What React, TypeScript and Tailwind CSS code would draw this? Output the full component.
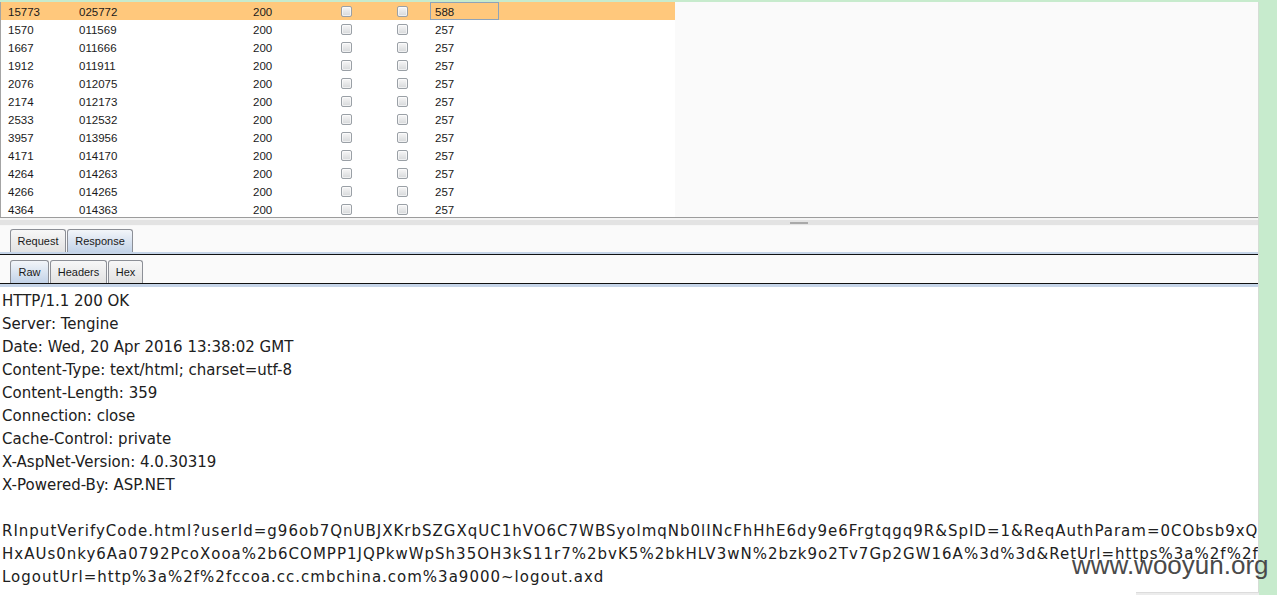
import React from "react";

const rows: [string, string, string][] = [
  ["15773", "025772", "588"],
  ["1570", "011569", "257"],
  ["1667", "011666", "257"],
  ["1912", "011911", "257"],
  ["2076", "012075", "257"],
  ["2174", "012173", "257"],
  ["2533", "012532", "257"],
  ["3957", "013956", "257"],
  ["4171", "014170", "257"],
  ["4264", "014263", "257"],
  ["4266", "014265", "257"],
  ["4364", "014363", "257"],
];

const headerLines = [
  "HTTP/1.1 200 OK",
  "Server: Tengine",
  "Date: Wed, 20 Apr 2016 13:38:02 GMT",
  "Content-Type: text/html; charset=utf-8",
  "Content-Length: 359",
  "Connection: close",
  "Cache-Control: private",
  "X-AspNet-Version: 4.0.30319",
  "X-Powered-By: ASP.NET",
];

const bodyLines = [
  "RInputVerifyCode.html?userId=g96ob7QnUBJXKrbSZGXqUC1hVO6C7WBSyolmqNb0lINcFhHhE6dy9e6Frgtqgq9R&SpID=1&ReqAuthParam=0CObsb9xQmT1rV",
  "HxAUs0nky6Aa0792PcoXooa%2b6COMPP1JQPkwWpSh35OH3kS11r7%2bvK5%2bkHLV3wN%2bzk9o2Tv7Gp2GW16A%3d%3d&RetUrl=https%3a%2f%2fccoa",
  "LogoutUrl=http%3a%2f%2fccoa.cc.cmbchina.com%3a9000~logout.axd",
];

function Check() {
  return (
    <div className="w-[11px] h-[11px] rounded-[2px] border border-[#9aa0a6] bg-gradient-to-b from-[#f7f7f7] to-[#d6d8da] shadow-[inset_0_0_0_1px_rgba(255,255,255,0.6)]" />
  );
}

function Tab({ label, selected, w }: { label: string; selected?: boolean; w: string }) {
  return (
    <div
      className={`${w} h-[23px] flex items-center justify-center rounded-t-[3px] border border-b-0 border-[#8c8f96] text-[11px] text-[#1a1a1a] ${
        selected
          ? "bg-gradient-to-b from-[#f2f5f9] to-[#c3d3e8]"
          : "bg-gradient-to-b from-[#f7f7f7] to-[#e2e2e2]"
      }`}
      style={{ fontFamily: '"Liberation Sans", Arial, sans-serif' }}
    >
      {label}
    </div>
  );
}

export default function App() {
  return (
    <div className="relative w-[1277px] h-[595px] overflow-hidden bg-[#c7ebcd] pt-[2px]">
      <div className="w-[1259px] h-[593px] flex flex-col bg-[#fafafa] border-r border-[#d5ddd5]">
        {/* table pane */}
        <div className="flex h-[216px] border-b border-[#9c9c9c] shrink-0">
          <div
            className="w-[675px] bg-white border-l border-[#a4a4a4] overflow-hidden text-[11.5px] leading-[14px] text-[#1a1a1a]"
            style={{ fontFamily: '"Liberation Sans", Arial, sans-serif' }}
          >
            {rows.map((r, i) => (
              <div
                key={i}
                className={`flex items-center h-[18px] ${i === 0 ? "bg-[#ffc87c]" : "bg-white"}`}
              >
                <div className="w-[74px] pl-[7px] pt-[2px]">{r[0]}</div>
                <div className="w-[174px] pl-[4px] pt-[2px]">{r[1]}</div>
                <div className="w-[79px] pl-[4px] pt-[2px]">200</div>
                <div className="w-[56px] pl-[13px]">
                  <Check />
                </div>
                <div className="w-[46px] pl-[13px]">
                  <Check />
                </div>
                <div
                  className={`w-[69px] h-[18px] flex items-center pt-[2px] ${
                    i === 0 ? "border border-[#8fa3b8] pl-[4px] pt-[1px]" : "pl-[5px]"
                  }`}
                >
                  {r[2]}
                </div>
                <div className="flex-1" />
              </div>
            ))}
          </div>
          <div className="flex-1 bg-[#fafafa]" />
        </div>

        {/* splitter */}
        <div className="h-[8px] shrink-0 flex flex-col">
          <div className="h-[2px] bg-[#f4f4f4]" />
          <div className="h-[5px] bg-[#e3e3e3] flex items-center">
            <div className="ml-[790px] w-[18px] h-[2px] bg-[#a9a9a9]" />
          </div>
          <div className="h-[1px] bg-[#f7f7f7]" />
        </div>

        {/* tab row 1 */}
        <div className="h-[26px] shrink-0 flex items-end pl-[10px] gap-[1px]">
          <Tab label="Request" w="w-[56px]" />
          <Tab label="Response" w="w-[66px]" selected />
        </div>
        <div className="h-[2px] bg-[#c5d4e8] shrink-0" />
        <div className="h-[1px] bg-[#111111] shrink-0" />

        {/* tab row 2 */}
        <div className="h-[28px] shrink-0 flex items-end pl-[10px] gap-[1px]">
          <Tab label="Raw" w="w-[39px]" selected />
          <Tab label="Headers" w="w-[57px]" />
          <Tab label="Hex" w="w-[35px]" />
        </div>
        <div className="h-[1px] bg-[#111111] shrink-0" />
        <div className="h-[3px] bg-[#c5d4e8] shrink-0" />

        {/* raw text */}
        <div
          className="flex-1 bg-white pt-[3px] pl-[2px] overflow-hidden text-[15px] leading-[23px] text-[#202020] whitespace-nowrap"
          style={{ fontFamily: '"DejaVu Sans", Verdana, sans-serif' }}
        >
          {headerLines.map((l, i) => (
            <div key={i}>{l}</div>
          ))}
          <div className="h-[23px]" />
          {bodyLines.map((l, i) => (
            <div key={i} className="tracking-[1px]">
              {l}
            </div>
          ))}
        </div>
      </div>

      {/* watermark */}
      <div
        className="absolute left-[1072px] top-[552px] text-[26px] leading-none text-[#4a4a4a]"
        style={{ fontFamily: '"Liberation Sans", Arial, sans-serif' }}
      >
        www.wooyun.org
      </div>
      <div className="absolute left-[1136px] top-[592px] w-[123px] h-[3px] bg-[#ececec] border-t border-[#dcdcdc]" />
    </div>
  );
}
